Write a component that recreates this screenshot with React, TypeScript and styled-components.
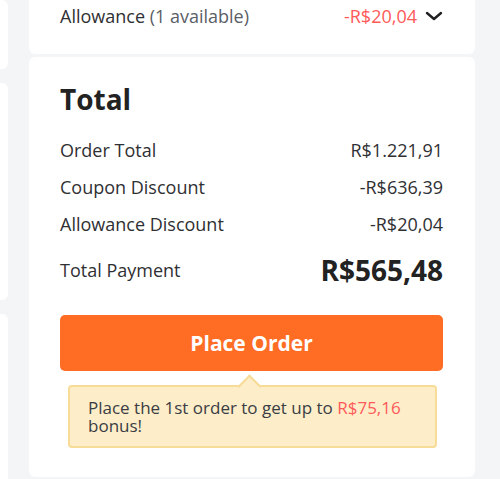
import React from "react";
import styled, { createGlobalStyle } from "styled-components";

const Global = createGlobalStyle`
  html, body { margin: 0; padding: 0; background: #f4f5f7; }
  body { font-family: "Open Sans", "Noto Sans", Arial, sans-serif; color: #2f3033; }
  * { box-sizing: border-box; }
`;

const Page = styled.div`
  display: flex;
  width: 500px;
  height: 479px;
  overflow: hidden;
`;

const SideColumn = styled.div`
  width: 8px;
  display: flex;
  flex-direction: column;
  gap: 14px;
  margin-right: 21px;
`;

const SideCard = styled.div<{ $h: number }>`
  height: ${(p) => p.$h}px;
  flex-shrink: 0;
  background: #fff;
  border-radius: 0 6px 6px 0;
`;

const Main = styled.div`
  width: 446px;
  display: flex;
  flex-direction: column;
  gap: 3px;
`;

const TopCard = styled.div`
  height: 54px;
  background: #fff;
  border-radius: 0 0 6px 6px;
  padding: 5px 32px 0 31px;
`;

const Card = styled.div`
  height: 420px;
  background: #fff;
  border-radius: 6px;
  padding: 23px 32px 0 31px;
`;

const Row = styled.div<{ $mt?: number }>`
  display: flex;
  justify-content: space-between;
  align-items: center;
  height: 22px;
  margin-top: ${(p) => p.$mt ?? 0}px;
  font-size: 18px;
`;

const Label = styled.span`
  color: #2f3033;
`;

const Muted = styled.span`
  color: #5a5e66;
`;

const Red = styled.span`
  color: #ff5a5a;
`;

const RightGroup = styled.span`
  display: flex;
  align-items: center;
  gap: 8px;
`;

const Title = styled.h2`
  margin: 0;
  font-size: 28px;
  font-weight: 700;
  line-height: 38px;
  color: #222;
`;

const BigAmount = styled.span`
  font-size: 28px;
  font-weight: 700;
  color: #222;
`;

const PlaceButton = styled.button`
  display: block;
  width: 100%;
  height: 56px;
  margin-top: 34px;
  border: none;
  border-radius: 5px;
  background: #ff6c24;
  color: #fff;
  font-family: "Open Sans", Arial, sans-serif;
  font-size: 21px;
  font-weight: 700;
`;

const Tip = styled.div`
  position: relative;
  margin: 14px 6px 0 8px;
  background: #fdedc9;
  border: 2px solid #f7dc97;
  border-radius: 4px;
  padding: 12px 18px 11px 18px;
  font-size: 17px;
  line-height: 18px;
  color: #3a3d44;
  &::before {
    content: "";
    position: absolute;
    top: -9px;
    left: 171px;
    width: 15px;
    height: 15px;
    background: #fdedc9;
    border-left: 2px solid #f7dc97;
    border-top: 2px solid #f7dc97;
    transform: rotate(45deg);
  }
`;

const Chevron = () => (
  <svg width="18" height="10" viewBox="0 0 18 10" fill="none">
    <path d="M2 2l7 6 7-6" stroke="#1f2023" strokeWidth="2.4" strokeLinecap="round" strokeLinejoin="round" />
  </svg>
);

export default function App() {
  return (
    <>
      <Global />
      <Page>
        <SideColumn>
          <SideCard $h={69} />
          <SideCard $h={217} />
          <SideCard $h={200} />
        </SideColumn>
        <Main>
          <TopCard>
            <Row>
              <Label>
                Allowance <Muted>(1 available)</Muted>
              </Label>
              <RightGroup>
                <Red>-R$20,04</Red>
                <Chevron />
              </RightGroup>
            </Row>
          </TopCard>
          <Card>
            <Title>Total</Title>
            <Row $mt={21}>
              <Label>Order Total</Label>
              <Label>R$1.221,91</Label>
            </Row>
            <Row $mt={15}>
              <Label>Coupon Discount</Label>
              <Label>-R$636,39</Label>
            </Row>
            <Row $mt={15}>
              <Label>Allowance Discount</Label>
              <Label>-R$20,04</Label>
            </Row>
            <Row $mt={24}>
              <Label>Total Payment</Label>
              <BigAmount>R$565,48</BigAmount>
            </Row>
            <PlaceButton>Place Order</PlaceButton>
            <Tip>
              Place the 1st order to get up to <Red>R$75,16</Red> bonus!
            </Tip>
          </Card>
        </Main>
      </Page>
    </>
  );
}
